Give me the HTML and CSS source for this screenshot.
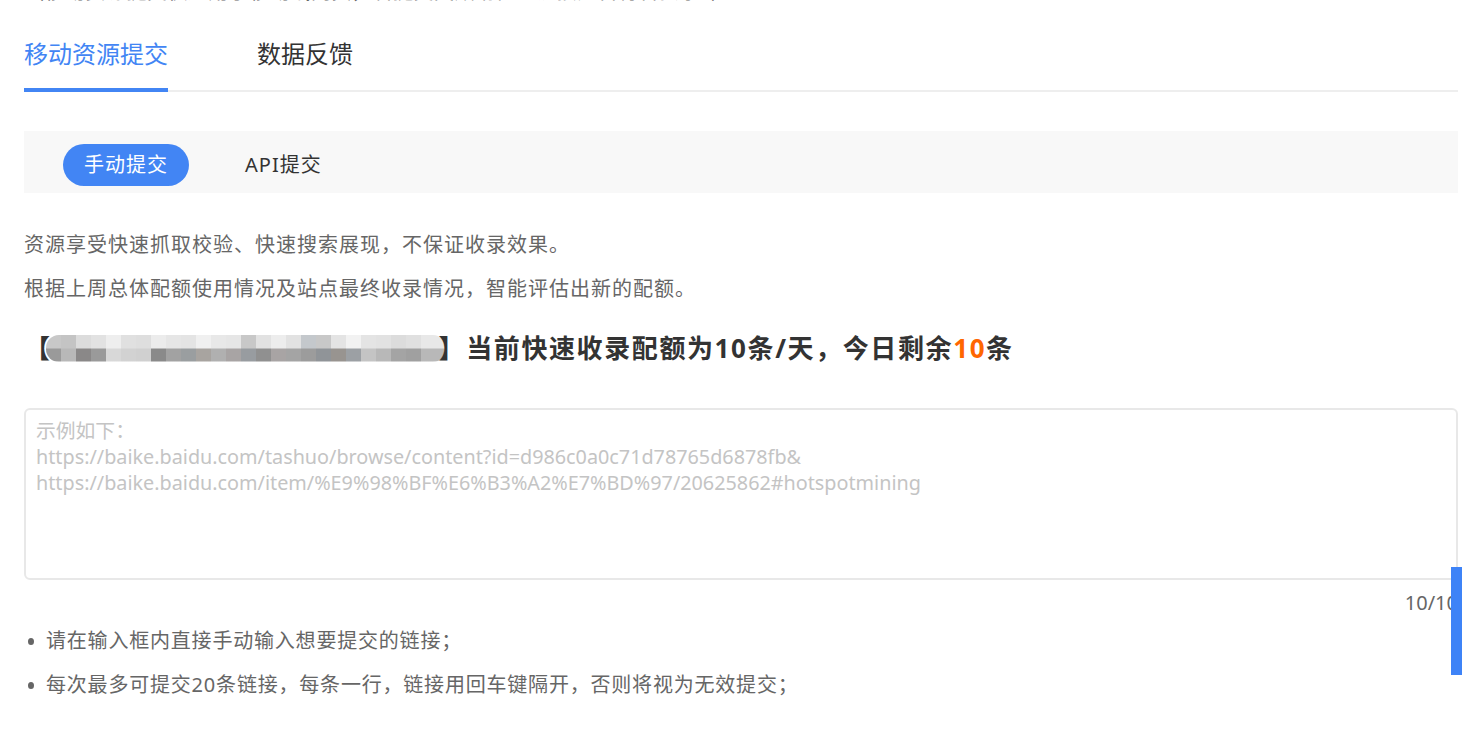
FILE: index.html
```html
<!DOCTYPE html>
<html lang="zh-CN">
<head>
  <meta charset="UTF-8" />
  <title>移动资源提交</title>
  <meta name="viewport" content="width=device-width, initial-scale=1.0" />
  <link rel="stylesheet" href="styles.css">
</head>
<body>

<div class="page">
  <p class="intro">（移动资源提交仅适用于移动端网页，若提交失败请检查链接是否符合要求。）</p>

  <nav class="tabs">
    <a class="tab active">移动资源提交</a>
    <a class="tab">数据反馈</a>
  </nav>

  <div class="subtabs">
    <span class="pill active">手动提交</span>
    <span class="pill">API提交</span>
  </div>

  <p class="desc">资源享受快速抓取校验、快速搜索展现，不保证收录效果。</p>
  <p class="desc">根据上周总体配额使用情况及站点最终收录情况，智能评估出新的配额。</p>

  <h3 class="quota">【<span class="mosaic"></span>】当前快速收录配额为10条/天，今日剩余<em>10</em>条</h3>

  <textarea class="url-box" placeholder="示例如下：&#10;https://baike.baidu.com/tashuo/browse/content?id=d986c0a0c71d78765d6878fb&amp;&#10;https://baike.baidu.com/item/%E9%98%BF%E6%B3%A2%E7%BD%97/20625862#hotspotmining"></textarea>
  <div class="counter">10/10</div>

  <ul class="tips">
    <li>请在输入框内直接手动输入想要提交的链接；</li>
    <li>每次最多可提交20条链接，每条一行，链接用回车键隔开，否则将视为无效提交；</li>
  </ul>
</div>

<div class="side-tab"></div>

</body>
</html>
```

FILE: styles.css
```css
:root {
  --blue: #4285f4;
  --text: #333333;
  --muted: #666666;
  --line: #eeeeee;
  --orange: #ff6600;
}

* {
  box-sizing: border-box;
  margin: 0;
  padding: 0;
}

body {
  font-family: "Noto Sans", "Noto Sans CJK SC", sans-serif;
  color: var(--text);
  background: #fff;
  overflow: hidden;
}

.page {
  padding: 0 4px 0 24px;
}

.intro {
  margin-top: -30px;
  font-size: 20px;
  line-height: 44px;
  color: var(--muted);
  letter-spacing: 0.5px;
}

/* main tabs */
.tabs {
  display: flex;
  gap: 89px;
  padding-top: 24px;
  border-bottom: 2px solid var(--line);
}

.tab {
  font-size: 24px;
  line-height: 32px;
  padding-bottom: 18px;
  margin-bottom: -2px;
  border-bottom: 4px solid transparent;
  color: var(--text);
  cursor: pointer;
}

.tab.active {
  color: var(--blue);
  border-bottom-color: var(--blue);
}

/* manual / api switch */
.subtabs {
  display: flex;
  gap: 35px;
  margin-top: 39px;
  padding: 13px 0 7px 39px;
  background: #f8f8f8;
}

.pill {
  height: 42px;
  line-height: 42px;
  padding: 0 21px;
  border-radius: 21px;
  font-size: 20px;
  letter-spacing: 1px;
  color: var(--text);
  cursor: pointer;
}

.pill.active {
  background: var(--blue);
  color: #fff;
}

.desc {
  font-size: 20px;
  line-height: 44px;
  color: var(--muted);
  letter-spacing: 1px;
}

.subtabs + .desc {
  margin-top: 30px;
}

.quota {
  margin-top: 17px;
  font-size: 26px;
  line-height: 40px;
  font-weight: bold;
  letter-spacing: 1.6px;
  color: var(--text);
  display: flex;
  align-items: center;
}

.quota em {
  font-style: normal;
  color: var(--orange);
}

/* pixelated site url */
.mosaic {
  display: inline-block;
  width: 400px;
  height: 27px;
  margin: 0 -7px 0 -6px;
  border-radius: 13px;
  background:
    linear-gradient(90deg,
      #c8c8c8 0 15px, #c4c4c4 15px 30px, #dcdcdc 30px 45px, #e2e2e2 45px 60px,
      #eeeeee 60px 75px, #e0e0e0 75px 90px, #dedede 90px 105px, #ececec 105px 120px,
      #e6e6e6 120px 135px, #e4e4e4 135px 150px, #f0f0f0 150px 165px, #e8e8e8 165px 180px,
      #e6e6e6 180px 195px, #c8c8c8 195px 210px, #e2e2e2 210px 225px, #ededed 225px 240px,
      #e2e2e2 240px 255px, #c4c8cc 255px 270px, #c8c8c8 270px 285px, #e4e4e4 285px 300px,
      #f2f2f2 300px 315px, #e4e4e4 315px 330px, #e2e2e2 330px 345px, #dcdcdc 345px 360px,
      #e0e0e0 360px 375px, #e8e8e8 375px 400px) top / 100% 50% no-repeat,
    linear-gradient(90deg,
      #9a9a9a 0 15px, #b8b8b8 15px 30px, #8a8888 30px 45px, #9a9a9a 45px 60px,
      #d8d8d8 60px 75px, #d2d2d2 75px 90px, #d0d0d0 90px 105px, #8a8a8a 105px 120px,
      #a2a2a2 120px 135px, #9a9ea0 135px 150px, #a8a4a0 150px 165px, #b0b0b0 165px 180px,
      #a8a4a4 180px 195px, #989ca0 195px 210px, #909090 210px 225px, #a8a4a4 225px 240px,
      #a4a4a4 240px 255px, #9c9c9c 255px 270px, #909498 270px 285px, #989490 285px 300px,
      #9ca0a4 300px 315px, #c4c4c4 315px 330px, #b8b8b8 330px 345px, #a4a4a4 345px 360px,
      #a0a0a0 360px 375px, #b8b8b8 375px 400px) bottom / 100% 50% no-repeat;
}

.url-box {
  display: block;
  width: 100%;
  height: 172px;
  margin-top: 40px;
  padding: 8px 10px;
  border: 2px solid #e8e8e8;
  border-radius: 6px;
  font-family: "Noto Sans", "Noto Sans CJK SC", sans-serif;
  font-size: 19.8px;
  line-height: 26px;
  color: var(--text);
  resize: none;
  outline: none;
}

.url-box::placeholder {
  color: #c4c4c4;
}

.counter {
  margin-top: 8px;
  text-align: right;
  font-size: 20px;
  line-height: 30px;
  color: var(--muted);
}

.tips {
  list-style: none;
  margin-top: 1px;
}

.tips li {
  display: flex;
  align-items: center;
  font-size: 20px;
  line-height: 44px;
  color: var(--muted);
  letter-spacing: 0.8px;
}

.tips li::before {
  content: "";
  width: 6px;
  height: 7px;
  border-radius: 50%;
  background: var(--muted);
  margin: 0 12px 0 4px;
}

/* floating feedback tab on the right edge */
.side-tab {
  position: fixed;
  right: 0;
  top: 567px;
  width: 11px;
  height: 108px;
  background: #3e83f7;
}
```
